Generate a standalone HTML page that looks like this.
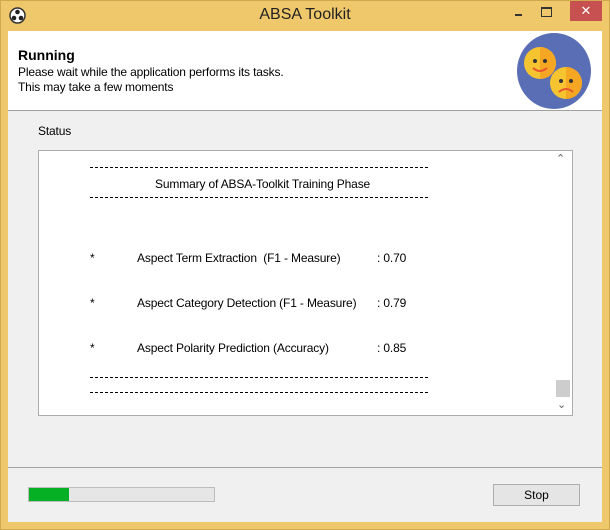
<!DOCTYPE html><html><head><style>
body{margin:0;width:610px;height:530px;background:#efc86b;font-family:"Liberation Sans",sans-serif;position:relative;overflow:hidden}
.a{position:absolute}
.t{font-size:12px;color:#000;white-space:pre;letter-spacing:-0.15px}
.dash{position:absolute;left:90px;width:338px;height:1px;background:repeating-linear-gradient(90deg,#000 0 3px,transparent 3px 5px)}
</style></head><body>
<div class="a" style="left:0;top:0;width:610px;height:530px;border:1px solid #d0a850;box-sizing:border-box"></div>
<svg class="a" style="left:9px;top:7px" width="17" height="17"><circle cx="8.5" cy="8.5" r="7.5" fill="#fff" stroke="#333" stroke-width="1.5"/><circle cx="8.5" cy="5" r="2.3" fill="#222"/><circle cx="5" cy="11" r="2.3" fill="#222"/><circle cx="12" cy="11" r="2.3" fill="#222"/></svg>
<div class="a" style="left:0;width:610px;top:6px;text-align:center;font-size:16px;color:#222">ABSA Toolkit</div>
<div class="a" style="left:515px;top:14px;width:7px;height:2px;background:#333"></div>
<div class="a" style="left:541px;top:7px;width:9px;height:7px;border:1px solid #333;border-top-width:2px"></div>
<div class="a" style="left:570px;top:1px;width:32px;height:20px;background:#c75050;color:#fff;text-align:center;font-size:13px;line-height:20px">✕</div>
<div class="a" style="left:8px;top:31px;width:594px;height:491px;background:#f0f0f0"></div>
<div class="a" style="left:8px;top:31px;width:594px;height:79px;background:#fff;border-bottom:1px solid #a0a0a0"></div>
<div class="a" style="left:18px;top:47px;font-size:14px;font-weight:bold">Running</div>
<div class="a t" style="left:18px;top:65px">Please wait while the application performs its tasks.</div>
<div class="a t" style="left:18px;top:80px">This may take a few moments</div>
<svg class="a" style="left:516px;top:33px" width="76" height="76"><ellipse cx="38" cy="38" rx="37" ry="38" fill="#5a6eb5"/><circle cx="24" cy="30" r="16" fill="#f6c430"/><path d="M24 14a16 16 0 0 1 0 32z" fill="#f5a623"/><circle cx="19" cy="28" r="2" fill="#333"/><circle cx="29" cy="28" r="2" fill="#333"/><path d="M17 35q7 6 14 0" stroke="#e8542f" stroke-width="2" fill="none"/><circle cx="50" cy="50" r="16" fill="#f6c430"/><path d="M50 34a16 16 0 0 1 0 32z" fill="#f5a623"/><circle cx="45" cy="48" r="2" fill="#333"/><circle cx="55" cy="48" r="2" fill="#333"/><path d="M43 59q7 -6 14 0" stroke="#e8542f" stroke-width="2" fill="none"/></svg>
<div class="a t" style="left:38px;top:124px">Status</div>
<div class="a" style="left:38px;top:150px;width:535px;height:266px;background:#fff;border:1px solid #acacac;box-sizing:border-box"></div>
<div class="a" style="left:556px;top:380px;width:14px;height:17px;background:#cdcdcd"></div>
<div class="a" style="left:556px;top:152px;font-size:11px;color:#606060">&#8963;</div>
<div class="a" style="left:557px;top:398px;font-size:11px;color:#606060">&#8964;</div>
<div class="dash" style="top:167px"></div>
<div class="a t" style="left:155px;top:177px">Summary of ABSA-Toolkit Training Phase</div>
<div class="dash" style="top:197px"></div>
<div class="a t" style="left:90px;top:251px">*</div><div class="a t" style="left:137px;top:251px">Aspect Term Extraction  (F1 - Measure)</div><div class="a t" style="left:377px;top:251px">: 0.70</div>
<div class="a t" style="left:90px;top:296px">*</div><div class="a t" style="left:137px;top:296px">Aspect Category Detection (F1 - Measure)</div><div class="a t" style="left:377px;top:296px">: 0.79</div>
<div class="a t" style="left:90px;top:341px">*</div><div class="a t" style="left:137px;top:341px">Aspect Polarity Prediction (Accuracy)</div><div class="a t" style="left:377px;top:341px">: 0.85</div>
<div class="dash" style="top:377px"></div>
<div class="dash" style="top:392px"></div>
<div class="a" style="left:8px;top:467px;width:594px;border-top:1px solid #a0a0a0"></div>
<div class="a" style="left:28px;top:487px;width:185px;height:13px;background:#e6e6e6;border:1px solid #bcbcbc"></div>
<div class="a" style="left:29px;top:488px;width:40px;height:13px;background:#06b025"></div>
<div class="a" style="left:493px;top:484px;width:85px;height:20px;background:#e5e5e5;border:1px solid #adadad;text-align:center;font-size:12px;line-height:20px">Stop</div>
</body></html>
